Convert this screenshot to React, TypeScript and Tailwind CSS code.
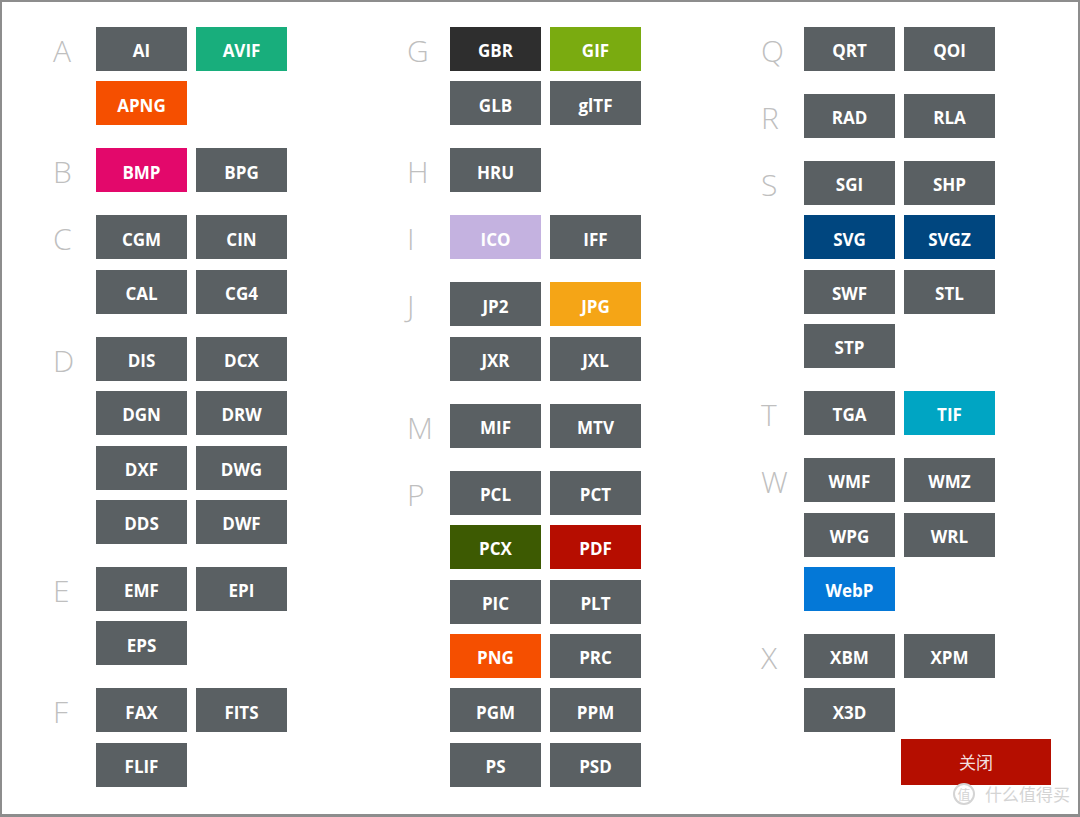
import React from 'react';

type Format = { label: string; color?: string };
type Group = { letter: string; items: Format[] };

const GRAY = 'bg-[#5a6063]';

const columns: Group[][] = [
  [
    { letter: 'A', items: [{ label: 'AI' }, { label: 'AVIF', color: 'bg-[#18ae7c]' }, { label: 'APNG', color: 'bg-[#f54f00]' }] },
    { letter: 'B', items: [{ label: 'BMP', color: 'bg-[#e3086b]' }, { label: 'BPG' }] },
    { letter: 'C', items: [{ label: 'CGM' }, { label: 'CIN' }, { label: 'CAL' }, { label: 'CG4' }] },
    {
      letter: 'D',
      items: [
        { label: 'DIS' },
        { label: 'DCX' },
        { label: 'DGN' },
        { label: 'DRW' },
        { label: 'DXF' },
        { label: 'DWG' },
        { label: 'DDS' },
        { label: 'DWF' },
      ],
    },
    { letter: 'E', items: [{ label: 'EMF' }, { label: 'EPI' }, { label: 'EPS' }] },
    { letter: 'F', items: [{ label: 'FAX' }, { label: 'FITS' }, { label: 'FLIF' }] },
  ],
  [
    {
      letter: 'G',
      items: [{ label: 'GBR', color: 'bg-[#2e2e2e]' }, { label: 'GIF', color: 'bg-[#7aab10]' }, { label: 'GLB' }, { label: 'glTF' }],
    },
    { letter: 'H', items: [{ label: 'HRU' }] },
    { letter: 'I', items: [{ label: 'ICO', color: 'bg-[#c4b2e0]' }, { label: 'IFF' }] },
    { letter: 'J', items: [{ label: 'JP2' }, { label: 'JPG', color: 'bg-[#f5a516]' }, { label: 'JXR' }, { label: 'JXL' }] },
    { letter: 'M', items: [{ label: 'MIF' }, { label: 'MTV' }] },
    {
      letter: 'P',
      items: [
        { label: 'PCL' },
        { label: 'PCT' },
        { label: 'PCX', color: 'bg-[#3d5a02]' },
        { label: 'PDF', color: 'bg-[#b60d00]' },
        { label: 'PIC' },
        { label: 'PLT' },
        { label: 'PNG', color: 'bg-[#f54f00]' },
        { label: 'PRC' },
        { label: 'PGM' },
        { label: 'PPM' },
        { label: 'PS' },
        { label: 'PSD' },
      ],
    },
  ],
  [
    { letter: 'Q', items: [{ label: 'QRT' }, { label: 'QOI' }] },
    { letter: 'R', items: [{ label: 'RAD' }, { label: 'RLA' }] },
    {
      letter: 'S',
      items: [
        { label: 'SGI' },
        { label: 'SHP' },
        { label: 'SVG', color: 'bg-[#00467f]' },
        { label: 'SVGZ', color: 'bg-[#00467f]' },
        { label: 'SWF' },
        { label: 'STL' },
        { label: 'STP' },
      ],
    },
    { letter: 'T', items: [{ label: 'TGA' }, { label: 'TIF', color: 'bg-[#00a5c3]' }] },
    { letter: 'W', items: [{ label: 'WMF' }, { label: 'WMZ' }, { label: 'WPG' }, { label: 'WRL' }, { label: 'WebP', color: 'bg-[#0478d7]' }] },
    { letter: 'X', items: [{ label: 'XBM' }, { label: 'XPM' }, { label: 'X3D' }] },
  ],
];

function FormatGroup({ group }: { group: Group }) {
  return (
    <div className="flex">
      <div className="w-[43px] h-[44px] flex items-center pt-[4px] text-[30px] font-light text-[#bfbfbf] leading-none">
        {group.letter}
      </div>
      <div className="grid grid-cols-[91px_91px] gap-x-[9px] gap-y-[10.4px]">
        {group.items.map((f) => (
          <div
            key={f.label}
            className={`h-[44px] flex items-center justify-center text-white text-[17px] font-bold pt-[4px] ${f.color ?? GRAY}`}
          >
            {f.label}
          </div>
        ))}
      </div>
    </div>
  );
}

export default function App() {
  return (
    <div
      className="relative w-[1080px] h-[817px] bg-white border-2 border-b-[3px] border-[#8d8d8d] overflow-hidden"
      style={{ fontFamily: '"Open Sans", "Noto Sans CJK SC", sans-serif' }}
    >
      <div className="flex pl-[51px] pt-[25px]">
        {columns.map((col, i) => (
          <div key={i} className="w-[354px] shrink-0 flex flex-col gap-[23px]">
            {col.map((g) => (
              <FormatGroup key={g.letter} group={g} />
            ))}
            {i === 2 && (
              <div className="flex pl-[140px] -mt-[16px]">
                <button className="w-[150px] h-[46px] bg-[#b50e00] text-[#f4dede] text-[17px]">关闭</button>
              </div>
            )}
          </div>
        ))}
      </div>

      {/* watermark */}
      <div className="absolute left-[951px] top-[781px] flex items-center gap-[10px] text-[#d4d4d4] whitespace-nowrap pointer-events-none">
        <div className="w-[22px] h-[22px] rounded-full border-2 border-[#d4d4d4] flex items-center justify-center text-[13px] leading-none">
          值
        </div>
        <span className="text-[17px] leading-none">什么值得买</span>
      </div>
    </div>
  );
}
